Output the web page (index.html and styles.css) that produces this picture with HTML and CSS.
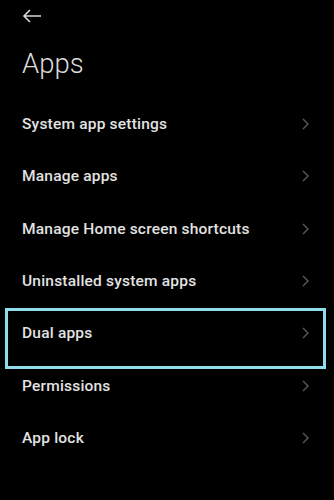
FILE: index.html
```html
<!DOCTYPE html>
<html lang="en">
<head>
  <meta charset="UTF-8" />
  <meta name="viewport" content="width=device-width, initial-scale=1.0"/>
  <title>Apps</title>
  <link rel="stylesheet" href="styles.css">
</head>
<body>

  <!-- TOPO -->
  <header class="topo">
    <a href="#" class="voltar" title="Back">
      <svg width="20" height="14" viewBox="0 0 20 14">
        <path d="M19 7H2M8 1L2 7l6 6" fill="none" stroke="#d8d8d8" stroke-width="1.6"/>
      </svg>
    </a>
    <h1 class="titulo">Apps</h1>
  </header>

  <!-- LISTA -->
  <ul class="lista">
    <li class="item"><span>System app settings</span><svg class="seta" viewBox="0 0 7 12"><path d="M1 1l5 5-5 5"/></svg></li>
    <li class="item"><span>Manage apps</span><svg class="seta" viewBox="0 0 7 12"><path d="M1 1l5 5-5 5"/></svg></li>
    <li class="item"><span>Manage Home screen shortcuts</span><svg class="seta" viewBox="0 0 7 12"><path d="M1 1l5 5-5 5"/></svg></li>
    <li class="item"><span>Uninstalled system apps</span><svg class="seta" viewBox="0 0 7 12"><path d="M1 1l5 5-5 5"/></svg></li>
    <li class="item destaque"><span>Dual apps</span><svg class="seta" viewBox="0 0 7 12"><path d="M1 1l5 5-5 5"/></svg></li>
    <li class="item"><span>Permissions</span><svg class="seta" viewBox="0 0 7 12"><path d="M1 1l5 5-5 5"/></svg></li>
    <li class="item"><span>App lock</span><svg class="seta" viewBox="0 0 7 12"><path d="M1 1l5 5-5 5"/></svg></li>
  </ul>

</body>
</html>
```

FILE: styles.css
```css
* {
  margin: 0;
  padding: 0;
  box-sizing: border-box;
}

body {
  font-family: Roboto, "Noto Sans", sans-serif;
  background-color: #000;
  color: #e2e2e2;
  width: 334px;
  height: 500px;
  overflow: hidden;
}

.topo {
  padding: 9px 22px 0;
  height: 98px;
}

.voltar {
  display: block;
  width: 20px;
  height: 14px;
}

.voltar svg {
  display: block;
}

.titulo {
  font-size: 27.5px;
  font-weight: 300;
  color: #dcdcdc;
  margin-top: 24px;
  line-height: 34px;
}

.lista {
  list-style: none;
}

.item {
  display: flex;
  align-items: center;
  justify-content: space-between;
  height: 52.3px;
  padding: 0 25px 0 22px;
  font-size: 15.5px;
  font-weight: 500;
  letter-spacing: 0.2px;
  position: relative;
}

.seta {
  width: 7px;
  height: 12px;
  fill: none;
  stroke: #5a5a5a;
  stroke-width: 1.4;
}

.destaque::after {
  content: "";
  position: absolute;
  top: 1px;
  left: 5px;
  right: 8px;
  bottom: -10px;
  border: 3px solid #8fdde9;
}
```
